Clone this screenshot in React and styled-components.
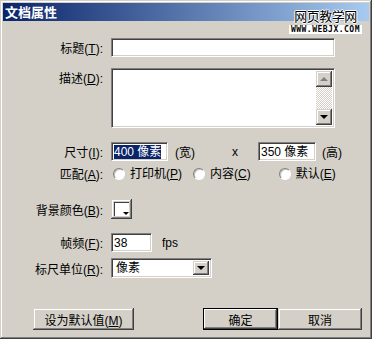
import styled, { createGlobalStyle } from "styled-components";

const GlobalStyle = createGlobalStyle`
  html, body { margin: 0; padding: 0; background: #d4d0c8; }
  body { font-family: "Liberation Sans", "Noto Sans CJK SC", sans-serif; font-size: 12px; }
`;

export default function App() {
  return (
    <>
      <GlobalStyle />
      <Window>
        <TitleBar>文档属性</TitleBar>
        <Watermark>
          <WmTitle>网页教学网</WmTitle>
          <WmUrl>WWW.WEBJX.COM</WmUrl>
        </Watermark>
        <Body>
          <Row $mt={17}>
            <Label>标题(<u>T</u>):</Label>
            <Field $w={224} />
          </Row>
          <Row $mt={11} $top>
            <Label $pt={1}>描述(<u>D</u>):</Label>
            <TextArea>
              <Scroll>
                <ScrollBtn>
                  <Arrow $up />
                </ScrollBtn>
                <Track />
                <ScrollBtn>
                  <Arrow />
                </ScrollBtn>
              </Scroll>
            </TextArea>
          </Row>
          <Row $mt={14}>
            <Label>尺寸(<u>I</u>):</Label>
            <Field $w={57}>
              <Selected>400 像素</Selected>
            </Field>
            <Unit $ml={7}>(宽)</Unit>
            <Unit $ml={37}>x</Unit>
            <Field $w={58} $ml={20}>350 像素</Field>
            <Unit $ml={6}>(高)</Unit>
          </Row>
          <Row $mt={4}>
            <Label>匹配(<u>A</u>):</Label>
            <Radio $ml={2} />
            <Option>打印机(<u>P</u>)</Option>
            <Radio $ml={11} />
            <Option>内容(<u>C</u>)</Option>
            <Radio $ml={28} />
            <Option>默认(<u>E</u>)</Option>
          </Row>
          <Row $mt={17}>
            <Label>背景颜色(<u>B</u>):</Label>
            <Swatch>
              <SwatchInner />
              <SwatchArrow />
            </Swatch>
          </Row>
          <Row $mt={14}>
            <Label>帧频(<u>F</u>):</Label>
            <Field $w={41}>38</Field>
            <Unit $ml={10}>fps</Unit>
          </Row>
          <Row $mt={6}>
            <Label>标尺单位(<u>R</u>):</Label>
            <Select>
              <SelectText>像素</SelectText>
              <DropBtn>
                <Arrow />
              </DropBtn>
            </Select>
          </Row>
          <Buttons>
            <Button $w={101}>设为默认值(<u>M</u>)</Button>
            <Spacer />
            <Button $w={75} $default>确定</Button>
            <Button $w={84}>取消</Button>
          </Buttons>
        </Body>
      </Window>
    </>
  );
}

const Window = styled.div`
  position: relative;
  width: 372px;
  height: 339px;
  box-sizing: border-box;
  padding: 3px;
  background: #d4d0c8;
  box-shadow: inset -1px -1px #404040, inset 1px 1px #d4d0c8,
    inset -2px -2px #808080, inset 2px 2px #ffffff;
  display: flex;
  flex-direction: column;
`;

const TitleBar = styled.div`
  height: 18px;
  line-height: 18px;
  padding-left: 2px;
  background: linear-gradient(to right, #0a246a, #a6caf0);
  color: #fff;
  font-weight: bold;
  font-size: 13px;
  font-family: "Noto Sans CJK SC", sans-serif;
`;

const Watermark = styled.div`
  position: absolute;
  top: 8px;
  right: 10px;
  display: flex;
  flex-direction: column;
  align-items: center;
`;

const WmTitle = styled.div`
  font-family: "Noto Sans CJK SC", sans-serif;
  font-size: 13px;
  line-height: 15px;
  letter-spacing: -0.5px;
  color: #000;
  text-shadow: 1px 0 #fff, -1px 0 #fff, 0 1px #fff, 0 -1px #fff;
`;

const WmUrl = styled.div`
  margin-top: 2px;
  padding: 0 2px;
  background: #fff;
  color: #000;
  font-family: "DejaVu Sans Mono", monospace;
  font-weight: bold;
  font-size: 8px;
  line-height: 9px;
  letter-spacing: 0.5px;
`;

const Body = styled.div`
  flex: 1;
  display: flex;
  flex-direction: column;
`;

const Row = styled.div`
  display: flex;
  align-items: ${(p) => (p.$top ? "flex-start" : "center")};
  margin-top: ${(p) => p.$mt}px;
`;

const Label = styled.div`
  width: 100px;
  margin-right: 8px;
  text-align: right;
  white-space: nowrap;
  padding-top: ${(p) => p.$pt || 0}px;
  color: #000;
`;

const sunken = `
  box-sizing: border-box;
  background: #fff;
  border: 1px solid;
  border-color: #808080 #fff #fff #808080;
  box-shadow: inset 1px 1px #404040, inset -1px -1px #d4d0c8;
`;

const raised = `
  box-sizing: border-box;
  background: #d4d0c8;
  box-shadow: inset -1px -1px #404040, inset 1px 1px #d4d0c8,
    inset -2px -2px #808080, inset 2px 2px #fff;
`;

const Field = styled.div`
  ${sunken}
  width: ${(p) => p.$w}px;
  height: 19px;
  margin-left: ${(p) => p.$ml || 0}px;
  padding: 2px 2px 0;
  line-height: 14px;
  white-space: nowrap;
  overflow: hidden;
`;

const Selected = styled.span`
  background: #0a246a;
  color: #fff;
`;

const TextArea = styled.div`
  ${sunken}
  width: 224px;
  height: 60px;
  padding: 2px;
  display: flex;
  justify-content: flex-end;
`;

const Scroll = styled.div`
  width: 16px;
  display: flex;
  flex-direction: column;
`;

const ScrollBtn = styled.div`
  ${raised}
  height: 16px;
  display: flex;
  align-items: center;
  justify-content: center;
`;

const Track = styled.div`
  flex: 1;
  background: repeating-conic-gradient(#fff 0 25%, #d4d0c8 0 50%) 0 0 / 2px 2px;
`;

const Arrow = styled.div`
  width: 0;
  height: 0;
  border-left: 4px solid transparent;
  border-right: 4px solid transparent;
  ${(p) =>
    p.$up
      ? "border-bottom: 4px solid #808080;"
      : "border-top: 4px solid #000;"}
`;

const Unit = styled.span`
  margin-left: ${(p) => p.$ml || 0}px;
`;

const Radio = styled.span`
  box-sizing: border-box;
  width: 12px;
  height: 12px;
  border-radius: 50%;
  background: #fff;
  border: 1px solid;
  border-color: #808080 #fff #fff #808080;
  box-shadow: inset 1px 1px #c0c0c0;
  margin-left: ${(p) => p.$ml}px;
`;

const Option = styled.span`
  margin-left: 5px;
  line-height: 16px;
`;

const Swatch = styled.div`
  ${raised}
  position: relative;
  width: 21px;
  height: 20px;
  padding: 3px;
`;

const SwatchInner = styled.div`
  width: 100%;
  height: 100%;
  box-sizing: border-box;
  background: #fff;
  border-top: 1px solid #404040;
  border-left: 1px solid #404040;
`;

const SwatchArrow = styled.div`
  position: absolute;
  right: 3px;
  bottom: 4px;
  border-left: 3px solid transparent;
  border-right: 3px solid transparent;
  border-top: 3px solid #000;
`;

const Select = styled.div`
  ${sunken}
  width: 101px;
  height: 20px;
  padding: 2px;
  display: flex;
  align-items: stretch;
`;

const SelectText = styled.div`
  flex: 1;
  padding-left: 2px;
  line-height: 14px;
`;

const DropBtn = styled.div`
  ${raised}
  width: 16px;
  display: flex;
  align-items: center;
  justify-content: center;
`;

const Buttons = styled.div`
  display: flex;
  margin-top: 30px;
  padding: 0 7px 0 30px;
`;

const Spacer = styled.div`
  flex: 1;
`;

const Button = styled.button`
  ${raised}
  width: ${(p) => p.$w}px;
  height: 22px;
  border: none;
  font: inherit;
  color: #000;
  padding: 0;
  ${(p) =>
    p.$default &&
    `box-shadow: inset 0 0 0 1px #000, inset -2px -2px #404040, inset 2px 2px #fff, inset -3px -3px #808080;`}
`;
